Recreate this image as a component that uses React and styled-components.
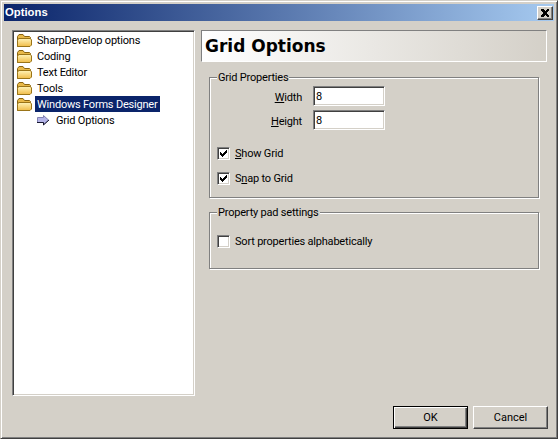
import styled, { createGlobalStyle } from 'styled-components';

const GlobalStyle = createGlobalStyle`
  html, body {
    margin: 0;
    padding: 0;
    background: #d4d0c8;
  }
`;

const UI_FONT = 'Roboto, "Liberation Sans", Arial, sans-serif';

// styled components
const Dialog = styled.div`
  box-sizing: border-box;
  width: 558px;
  height: 439px;
  padding: 3px;
  display: flex;
  flex-direction: column;
  background: #d4d0c8;
  border: 1px solid;
  border-color: #d4d0c8 #404040 #404040 #d4d0c8;
  box-shadow: inset 1px 1px 0 #fff, inset -1px -1px 0 #808080;
  font-family: ${UI_FONT};
  font-size: 11px;
  letter-spacing: -0.2px;
  color: #000;
`;

const TitleBar = styled.div`
  height: 17px;
  flex: none;
  padding: 0 1px 0 1px;
  display: flex;
  align-items: center;
  justify-content: space-between;
  background: linear-gradient(to right, #0a246a, #a6caf0);
`;

const TitleText = styled.span`
  color: #fff;
  font-family: "Liberation Sans", Arial, sans-serif;
  font-weight: 700;
  font-size: 11.3px;
  letter-spacing: 0;
  margin-bottom: 1px;
`;

const CloseButton = styled.div`
  box-sizing: border-box;
  width: 16px;
  height: 14px;
  display: flex;
  align-items: center;
  justify-content: center;
  background: #d4d0c8;
  border: 1px solid;
  border-color: #fff #404040 #404040 #fff;
  box-shadow: inset -1px -1px 0 #808080;
`;

const Content = styled.div`
  flex: 1;
  min-height: 0;
  padding: 9px 7px 0 8px;
  display: flex;
  gap: 6px;
`;

const Tree = styled.div`
  box-sizing: border-box;
  width: 183px;
  height: 366px;
  flex: none;
  padding: 1px 2px 0;
  background: #fff;
  border: 1px solid;
  border-color: #808080 #fff #fff #808080;
  box-shadow: inset 1px 1px 0 #404040, inset -1px -1px 0 #d4d0c8;
`;

const TreeRow = styled.div`
  height: 16px;
  display: flex;
  align-items: center;
  padding-left: ${props => (props.$child ? '22px' : '1px')};
`;

const TreeLabel = styled.span`
  margin-left: ${props => (props.$child ? '5px' : '3px')};
  padding: 0 2px;
  height: 16px;
  line-height: 18px;
  white-space: nowrap;
  background: ${props => (props.$selected ? '#0a246a' : 'transparent')};
  color: ${props => (props.$selected ? '#fff' : '#000')};
`;

const RightPane = styled.div`
  flex: 1;
  min-width: 0;
  display: flex;
  flex-direction: column;
`;

const Heading = styled.h1`
  box-sizing: border-box;
  height: 32px;
  margin: 0;
  padding-left: 3px;
  display: flex;
  align-items: center;
  font-family: "DejaVu Sans", Verdana, sans-serif;
  font-size: 17px;
  font-weight: 700;
  letter-spacing: 0;
  background: linear-gradient(to right, #fff, #d4d0c8);
  border: 1px solid;
  border-color: #808080 #fff #fff #808080;
`;

const Groups = styled.div`
  padding: 15px 8px 0;
  display: flex;
  flex-direction: column;
  gap: 14px;
`;

const Group = styled.div`
  position: relative;
  box-sizing: border-box;
  height: ${props => props.$height}px;
  border: 1px solid #808080;
  box-shadow: inset 1px 1px 0 #fff, 1px 1px 0 #fff;
  padding: ${props => props.$pad};
`;

const Legend = styled.span`
  position: absolute;
  top: -7px;
  left: 7px;
  padding: 0 1px;
  line-height: 13px;
  background: #d4d0c8;
`;

const FieldRow = styled.div`
  display: grid;
  grid-template-columns: 85px 72px;
  column-gap: 11px;
  align-items: center;
  margin-bottom: 4px;
`;

const FieldLabel = styled.label`
  text-align: right;
  padding-top: 3px;
`;

const TextBox = styled.input`
  box-sizing: border-box;
  width: 72px;
  height: 20px;
  padding: 0 1px 0 2px;
  outline: none;
  background: #fff;
  font: inherit;
  border: 1px solid;
  border-color: #808080 #fff #fff #808080;
  box-shadow: inset 1px 1px 0 #404040, inset -1px -1px 0 #d4d0c8;
`;

const CheckRow = styled.div`
  height: 13px;
  display: flex;
  align-items: center;
  gap: 5px;
  margin-top: ${props => props.$top || 0}px;
`;

const CheckBox = styled.span`
  box-sizing: border-box;
  width: 13px;
  height: 13px;
  flex: none;
  display: flex;
  align-items: center;
  justify-content: center;
  background: #fff;
  border: 1px solid;
  border-color: #808080 #fff #fff #808080;
  box-shadow: inset 1px 1px 0 #404040, inset -1px -1px 0 #d4d0c8;
`;

const ButtonRow = styled.div`
  flex: none;
  padding: 0 6px 6px 0;
  display: flex;
  justify-content: flex-end;
  gap: 5px;
`;

const Button = styled.button`
  box-sizing: border-box;
  width: 75px;
  height: 23px;
  padding: 0;
  background: #d4d0c8;
  font: inherit;
  color: #000;
  border: 1px solid;
  border-color: ${props => (props.$default ? '#000' : '#fff #404040 #404040 #fff')};
  box-shadow: ${props => (props.$default
    ? 'inset 1px 1px 0 #fff, inset -1px -1px 0 #404040, inset -2px -2px 0 #808080'
    : 'inset -1px -1px 0 #808080')};
`;

// icons
const FolderIcon = () => (
  <svg width="16" height="16" viewBox="0 0 16 16">
    <defs>
      <linearGradient id="folderFront" x1="0" y1="0" x2="0" y2="1">
        <stop offset="0" stopColor="#fff3b8" />
        <stop offset="1" stopColor="#f0bc48" />
      </linearGradient>
    </defs>
    <path d="M1.5 14.5V4.5L3 2.5H7L8.5 4.5H13.5L14.5 5.5V8H3Z" fill="#e8b848" stroke="#8a6410" />
    <path d="M1.5 14.5V8.5L2.5 6.5H14.5L15.5 8V13L14 14.5Z" fill="url(#folderFront)" stroke="#9a7418" />
  </svg>
);

const ArrowIcon = () => (
  <svg width="12" height="12" viewBox="0 0 12 12">
    <path d="M6.5 1.5L11.5 6L6.5 10.5V8.5H.5V3.5H6.5Z" fill="#b4b4e8" stroke="#8080b0" />
    <path d="M0 8.5H6.5V11L12 6" fill="none" stroke="#181830" />
  </svg>
);

const CloseGlyph = () => (
  <svg width="10" height="8" viewBox="0 0 10 8" shapeRendering="crispEdges">
    <path d="M1 0H3L5 2L7 0H9V1L6.5 4L9 7V8H7L5 6L3 8H1V7L3.5 4L1 1Z" fill="#000" />
  </svg>
);

const CheckGlyph = () => (
  <svg width="9" height="9" viewBox="0 0 9 9" shapeRendering="crispEdges">
    <path d="M1 3H2V4H3V5H4V4H5V3H6V2H7V1H8V4H7V5H6V6H5V7H4V8H3V7H2V6H1Z" fill="#000" />
  </svg>
);

const folders = [
  { name: 'SharpDevelop options' },
  { name: 'Coding' },
  { name: 'Text Editor' },
  { name: 'Tools' },
  { name: 'Windows Forms Designer', selected: true },
];

// component
const App = () => {
  return (
    <Dialog>
      <GlobalStyle />
      <TitleBar>
        <TitleText>Options</TitleText>
        <CloseButton><CloseGlyph /></CloseButton>
      </TitleBar>

      <Content>
        <Tree>
          {folders.map((folder) => (
            <TreeRow key={folder.name}>
              <FolderIcon />
              <TreeLabel $selected={folder.selected}>{folder.name}</TreeLabel>
            </TreeRow>
          ))}
          <TreeRow $child>
            <ArrowIcon />
            <TreeLabel $child>Grid Options</TreeLabel>
          </TreeRow>
        </Tree>

        <RightPane>
          <Heading>Grid Options</Heading>
          <Groups>
            <Group $height={121} $pad="8px 0 0 7px">
              <Legend>Grid Properties</Legend>
              <FieldRow>
                <FieldLabel><u>W</u>idth</FieldLabel>
                <TextBox defaultValue="8" />
              </FieldRow>
              <FieldRow>
                <FieldLabel><u>H</u>eight</FieldLabel>
                <TextBox defaultValue="8" />
              </FieldRow>
              <CheckRow $top={17}>
                <CheckBox><CheckGlyph /></CheckBox>
                <span><u>S</u>how Grid</span>
              </CheckRow>
              <CheckRow $top={12}>
                <CheckBox><CheckGlyph /></CheckBox>
                <span>S<u>n</u>ap to Grid</span>
              </CheckRow>
            </Group>

            <Group $height={57} $pad="22px 0 0 7px">
              <Legend>Property pad settings</Legend>
              <CheckRow>
                <CheckBox />
                <span>Sort properties alphabetically</span>
              </CheckRow>
            </Group>
          </Groups>
        </RightPane>
      </Content>

      <ButtonRow>
        <Button $default>OK</Button>
        <Button>Cancel</Button>
      </ButtonRow>
    </Dialog>
  );
};

export default App;
